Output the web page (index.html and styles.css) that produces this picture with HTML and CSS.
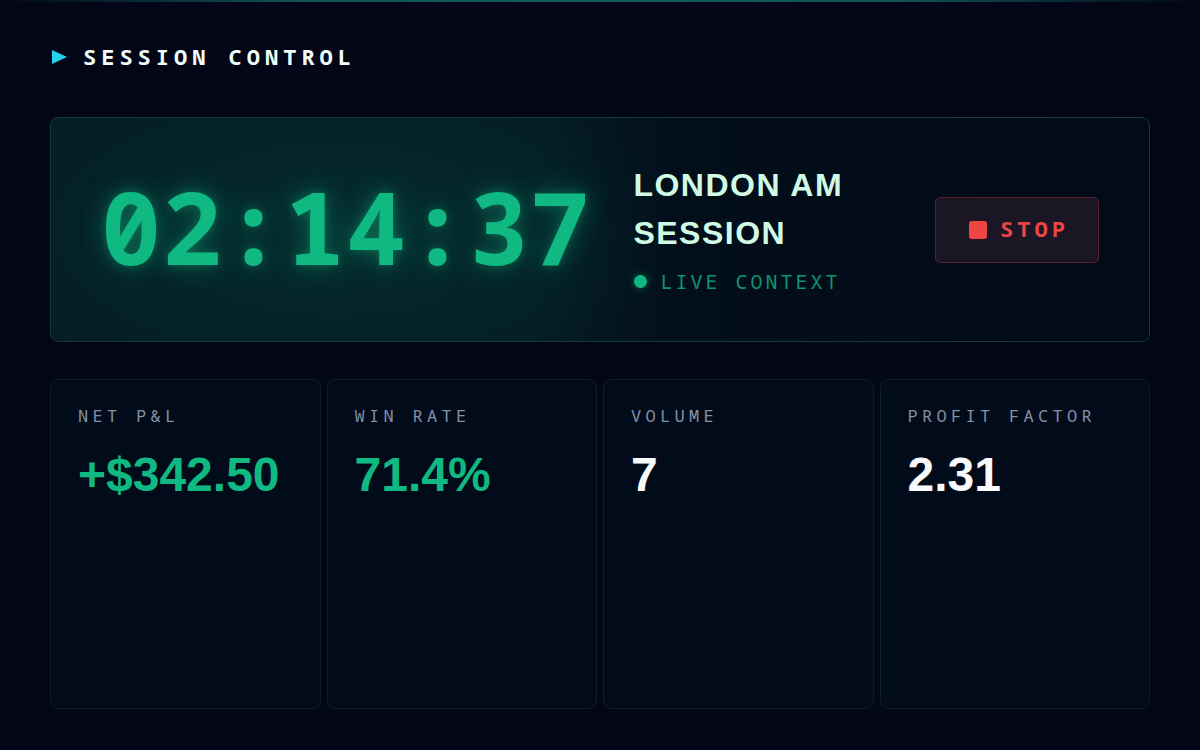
FILE: index.html
```html
<!DOCTYPE html>
<html lang="en">
<head>
<meta charset="utf-8">
<title>Session Control</title>
<link rel="stylesheet" href="styles.css">
</head>
<body>
<div class="page">
  <h1 class="heading">
    <svg class="heading-icon" width="15" height="14" viewBox="0 0 15 14"><path d="M0 0 L15 7 L0 14 Z" fill="#22d3ee"/></svg>
    <span>SESSION CONTROL</span>
  </h1>

  <section class="session-card">
    <div class="timer">02:14:37</div>
    <div class="session-info">
      <div class="session-title">LONDON AM SESSION</div>
      <div class="live">
        <span class="live-dot"></span>
        <span class="live-text">LIVE CONTEXT</span>
      </div>
    </div>
    <button class="stop-btn" type="button">
      <span class="stop-icon"></span>
      <span class="stop-label">STOP</span>
    </button>
  </section>

  <section class="stats">
    <div class="stat">
      <div class="stat-label">NET P&amp;L</div>
      <div class="stat-value green">+$342.50</div>
    </div>
    <div class="stat">
      <div class="stat-label">WIN RATE</div>
      <div class="stat-value green">71.4%</div>
    </div>
    <div class="stat">
      <div class="stat-label">VOLUME</div>
      <div class="stat-value">7</div>
    </div>
    <div class="stat">
      <div class="stat-label">PROFIT FACTOR</div>
      <div class="stat-value">2.31</div>
    </div>
  </section>
</div>
</body>
</html>
```

FILE: styles.css
```css
* { box-sizing: border-box; }

html, body {
  margin: 0;
  padding: 0;
  height: 100%;
}

body {
  background:
    linear-gradient(90deg, rgba(15,118,110,0) 0%, rgba(17,94,89,0.9) 25%, rgba(17,94,89,1) 50%, rgba(17,94,89,0.9) 75%, rgba(15,118,110,0) 100%) top / 100% 2px no-repeat,
    #020617;
  font-family: "Noto Sans Mono", "DejaVu Sans Mono", monospace;
  color: #e2e8f0;
}

.page {
  height: 750px;
  padding: 43px 50px 41px;
  display: flex;
  flex-direction: column;
}

.heading {
  margin: 0 0 48px;
  display: flex;
  align-items: center;
  gap: 16px;
  font-family: "Noto Sans Mono", "DejaVu Sans Mono", monospace;
  font-weight: bold;
  font-size: 22px;
  letter-spacing: 5px;
  color: #f0fdfa;
  line-height: 26px;
  padding-left: 2px;
}

.heading-icon {
  flex: none;
  margin-top: 2px;
}

.session-card {
  height: 225px;
  flex: none;
  border: 1px solid #0e3a40;
  border-radius: 8px;
  background:
    radial-gradient(ellipse 340px 160px at 290px 50%, rgba(16,185,129,0.10), rgba(16,185,129,0) 100%),
    linear-gradient(90deg, #041d26 0%, #041c25 45%, #020e1a 58%, #020c18 100%);
  display: flex;
  align-items: center;
  padding: 0 50px 0 50px;
}

.timer {
  font-family: "Noto Sans Mono", "DejaVu Sans Mono", monospace;
  font-weight: bold;
  font-size: 100px;
  letter-spacing: 1.3px;
  line-height: 1;
  color: #10b981;
  text-shadow: 0 0 28px rgba(16,185,129,0.45), 0 0 8px rgba(16,185,129,0.35);
  margin-right: 42px;
  margin-bottom: 8px;
  flex: none;
}

.session-info {
  flex: 1;
  display: flex;
  flex-direction: column;
  gap: 13px;
  padding-bottom: 6px;
}

.session-title {
  font-family: "Liberation Sans", Arial, sans-serif;
  font-weight: bold;
  font-size: 32px;
  line-height: 48px;
  letter-spacing: 1.5px;
  color: #d1fae5;
  max-width: 240px;
}

.live {
  display: flex;
  align-items: center;
  gap: 13px;
}

.live-dot {
  width: 13px;
  height: 13px;
  border-radius: 50%;
  background: #10b981;
  box-shadow: 0 0 8px rgba(16,185,129,0.5);
  flex: none;
  margin-left: 1px;
}

.live-text {
  font-family: "Noto Sans Mono", "DejaVu Sans Mono", monospace;
  font-size: 20px;
  letter-spacing: 3px;
  color: #0e9570;
  line-height: 23px;
}

.stop-btn {
  flex: none;
  height: 66px;
  width: 164px;
  display: flex;
  align-items: center;
  justify-content: center;
  gap: 13px;
  padding: 0 0 0 4px;
  background: #1b1624;
  border: 1px solid #5b1e2c;
  border-radius: 5px;
  color: #ef4444;
  font-family: "Noto Sans Mono", "DejaVu Sans Mono", monospace;
  font-weight: bold;
  font-size: 22px;
  letter-spacing: 4px;
  cursor: pointer;
}

.stop-label {
  line-height: 26px;
  margin-bottom: 4px;
}

.stop-icon {
  width: 18px;
  height: 18px;
  border-radius: 3px;
  background: #ef4444;
  flex: none;
}

.stats {
  margin-top: 37px;
  flex: 1;
  display: grid;
  grid-template-columns: repeat(4, 1fr);
  gap: 6px;
}

.stat {
  border: 1px solid #0b1f2b;
  border-radius: 8px;
  background: #020b1a;
  padding: 26px 27px;
}

.stat-label {
  font-family: "Noto Sans Mono", "DejaVu Sans Mono", monospace;
  font-size: 17px;
  letter-spacing: 4.3px;
  color: #8391a5;
  line-height: 20px;
}

.stat-value {
  margin-top: 21px;
  font-family: "Liberation Sans", Arial, sans-serif;
  font-weight: bold;
  font-size: 48px;
  line-height: 56px;
  color: #f8fafc;
}

.stat-value.green { color: #10b981; }
```
